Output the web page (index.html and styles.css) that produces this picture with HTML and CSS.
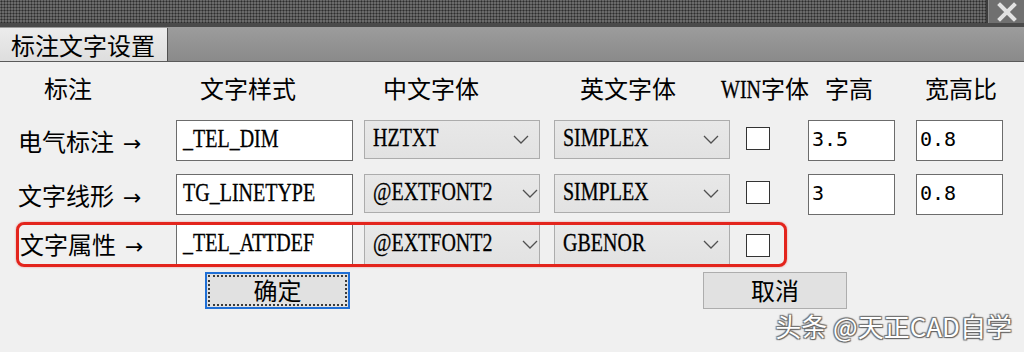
FILE: index.html
```html
<!DOCTYPE html>
<html lang="zh">
<head>
<meta charset="utf-8">
<title>标注文字设置</title>
<link rel="stylesheet" href="styles.css">
</head>
<body>
<div class="window">
  <div class="titlebar">
    <div class="dots"></div>
    <div class="close"><svg width="20" height="20" viewBox="0 0 20 20"><path d="M3 3 L17 17 M17 3 L3 17" stroke="#e2e2e2" stroke-width="4" stroke-linecap="square"/></svg></div>
  </div>
  <div class="tabbar">
    <div class="tab">标注文字设置</div>
  </div>
  <div class="main">
    <div class="head">
      <span class="h h1">标注</span>
      <span class="h h2">文字样式</span>
      <span class="h h3">中文字体</span>
      <span class="h h4">英文字体</span>
      <span class="h h5"><span class="v">WIN</span>字体</span>
      <span class="h h6">字高</span>
      <span class="h h7">宽高比</span>
    </div>

    <div class="row">
      <div class="label">电气标注<span class="arrow">→</span></div>
      <div class="txt"><span class="v">_TEL_DIM</span></div>
      <div class="combo c1"><span class="v">HZTXT</span><svg class="chev" width="16" height="9" viewBox="0 0 16 9"><polyline points="1,1 8,8 15,1" fill="none" stroke="#505050" stroke-width="1.3"/></svg></div>
      <div class="combo c2"><span class="v">SIMPLEX</span><svg class="chev" width="16" height="9" viewBox="0 0 16 9"><polyline points="1,1 8,8 15,1" fill="none" stroke="#505050" stroke-width="1.3"/></svg></div>
      <div class="check"></div>
      <div class="num n1">3.5</div>
      <div class="num n2">0.8</div>
    </div>

    <div class="row r2">
      <div class="label">文字线形<span class="arrow">→</span></div>
      <div class="txt"><span class="v">TG_LINETYPE</span></div>
      <div class="combo c1"><span class="v">@EXTFONT2</span><svg class="chev" width="16" height="9" viewBox="0 0 16 9"><polyline points="1,1 8,8 15,1" fill="none" stroke="#505050" stroke-width="1.3"/></svg></div>
      <div class="combo c2"><span class="v">SIMPLEX</span><svg class="chev" width="16" height="9" viewBox="0 0 16 9"><polyline points="1,1 8,8 15,1" fill="none" stroke="#505050" stroke-width="1.3"/></svg></div>
      <div class="check"></div>
      <div class="num n1">3</div>
      <div class="num n2">0.8</div>
    </div>

    <div class="row hl">
      <div class="label">文字属性<span class="arrow">→</span></div>
      <div class="txt"><span class="v">_TEL_ATTDEF</span></div>
      <div class="combo c1"><span class="v">@EXTFONT2</span><svg class="chev" width="16" height="9" viewBox="0 0 16 9"><polyline points="1,1 8,8 15,1" fill="none" stroke="#505050" stroke-width="1.3"/></svg></div>
      <div class="combo c2"><span class="v">GBENOR</span><svg class="chev" width="16" height="9" viewBox="0 0 16 9"><polyline points="1,1 8,8 15,1" fill="none" stroke="#505050" stroke-width="1.3"/></svg></div>
      <div class="check"></div>
    </div>

    <div class="buttons">
      <div class="btn ok"><span class="focus">确定</span></div>
      <div class="btn cancel">取消</div>
    </div>
  </div>
  <div class="watermark">头条 @天正CAD自学</div>
</div>
</body>
</html>
```

FILE: styles.css
```css
* { box-sizing: border-box; }
html, body { margin: 0; padding: 0; }
body {
  width: 1024px;
  height: 352px;
  overflow: hidden;
  background: #f0f0f0;
  font-family: "Noto Sans CJK SC", "Noto Sans", sans-serif;
  color: #000;
}
.window { position: relative; width: 1024px; height: 352px; }

.titlebar {
  display: flex;
  height: 27px;
  border-bottom: 4px solid #4a4a4a;
  background: #555;
}
.dots {
  flex: 1;
  background: #6a6a6a radial-gradient(circle, #2c2c2c 40%, #6a6a6a 55%) 0 0 / 3px 3px;
  border-right: 2px solid #3c3c3c;
}
.close {
  width: 36px;
  background: #707070;
  border-left: 1px solid #888;
  display: flex;
  align-items: center;
  justify-content: center;
}

.tabbar {
  height: 35px;
  background: linear-gradient(#9c9c9c, #8a8a8a);
  border-bottom: 1px solid #5a5a5a;
  padding-top: 1px;
}
.tab {
  width: 168px;
  height: 33px;
  background: linear-gradient(#ececec, #dedede);
  border-right: 1px solid #505050;
  font-size: 24px;
  line-height: 33px;
  padding-left: 11px;
  white-space: nowrap;
}

.main { padding-left: 16px; }

.head {
  display: flex;
  height: 50px;
  align-items: center;
  font-size: 24px;
  white-space: nowrap;
}
.h { display: block; }
.h1 { margin-left: 28px; width: 156px; }
.h2 { width: 183px; }
.h3 { width: 197px; }
.h4 { width: 141px; }
.h5 { width: 104px; }
.h5 .v { width: 40px; }
.h6 { width: 100px; }
.h7 { width: 90px; }

/* tall, narrow CAD-style latin text */
.v {
  display: inline-block;
  font-family: "Liberation Serif", serif;
  font-size: 25px;
  transform: scaleX(0.8);
  transform-origin: left center;
  -webkit-text-stroke: 0.3px #000;
  white-space: nowrap;
}

.row {
  display: flex;
  align-items: flex-start;
  height: 41px;
  margin-top: 8px;
}
.row.r2 { margin-top: 13px; }
.label {
  width: 160px;
  padding-left: 2px;
  font-size: 24px;
  line-height: 41px;
  white-space: nowrap;
}
.arrow { margin-left: 9px; font-family: "DejaVu Sans", sans-serif; font-size: 22px; }
.txt {
  width: 177px;
  height: 41px;
  background: #fff;
  border: 1px solid #6c6c6c;
  line-height: 36px;
  padding-left: 6px;
  overflow: hidden;
}
.combo {
  width: 176px;
  height: 39px;
  background: linear-gradient(#e8e8e8, #e2e2e2);
  border: 1px solid #acacac;
  display: flex;
  align-items: center;
  padding: 0 10px 0 8px;
  overflow: hidden;
}
.combo .v { padding-bottom: 3px; }
.combo .chev { margin-left: auto; flex: none; }
.c1 { margin-left: 11px; }
.c2 { margin-left: 14px; }
.check {
  width: 24px;
  height: 23px;
  margin-left: 16px;
  margin-top: 7px;
  background: #fff;
  border: 1px solid #333;
}
.num {
  width: 87px;
  height: 41px;
  background: #fff;
  border: 1px solid #6c6c6c;
  font-family: "DejaVu Sans Mono", monospace;
  font-size: 20px;
  line-height: 36px;
  padding-left: 3px;
}
.n1 { margin-left: 38px; }
.n2 { margin-left: 21px; }

.row.hl {
  width: 771px;
  height: 45px;
  margin-top: 7px;
  border: 3px solid #e3241c;
  border-radius: 8px;
  box-shadow: 0 0 2px rgba(227, 36, 28, 0.5);
}
.hl .label { width: 157px; padding-left: 1px; line-height: 38px; }
.hl .txt { height: 39px; border-top: none; border-bottom: none; line-height: 36px; }
.hl .combo { height: 39px; border-top: none; border-bottom: none; }
.hl .check { margin-top: 9px; }

.buttons {
  display: flex;
  margin-top: 5px;
  height: 37px;
}
.btn {
  width: 145px;
  height: 37px;
  background: #e1e1e1;
  font-size: 24px;
  display: flex;
  align-items: center;
  justify-content: center;
}
.ok {
  margin-left: 189px;
  border: 2px solid #1f6fd6;
  padding: 1px;
}
.ok .focus {
  width: 100%;
  height: 100%;
  border: 2px dotted #3a3a3a;
  display: flex;
  align-items: center;
  justify-content: center;
  line-height: 1;
  padding-bottom: 2px;
}
.cancel {
  margin-left: 353px;
  width: 144px;
  border: 1px solid #adadad;
  line-height: 1;
  padding-bottom: 2px;
}

.watermark {
  position: absolute;
  right: 12px;
  bottom: 8px;
  font-size: 26px;
  color: #fff;
  white-space: nowrap;
  text-shadow: 0 0 1px #555, 1px 1px 1px #666, -1px -1px 1px #777, 1px -1px 1px #777, -1px 1px 1px #777;
}
```
